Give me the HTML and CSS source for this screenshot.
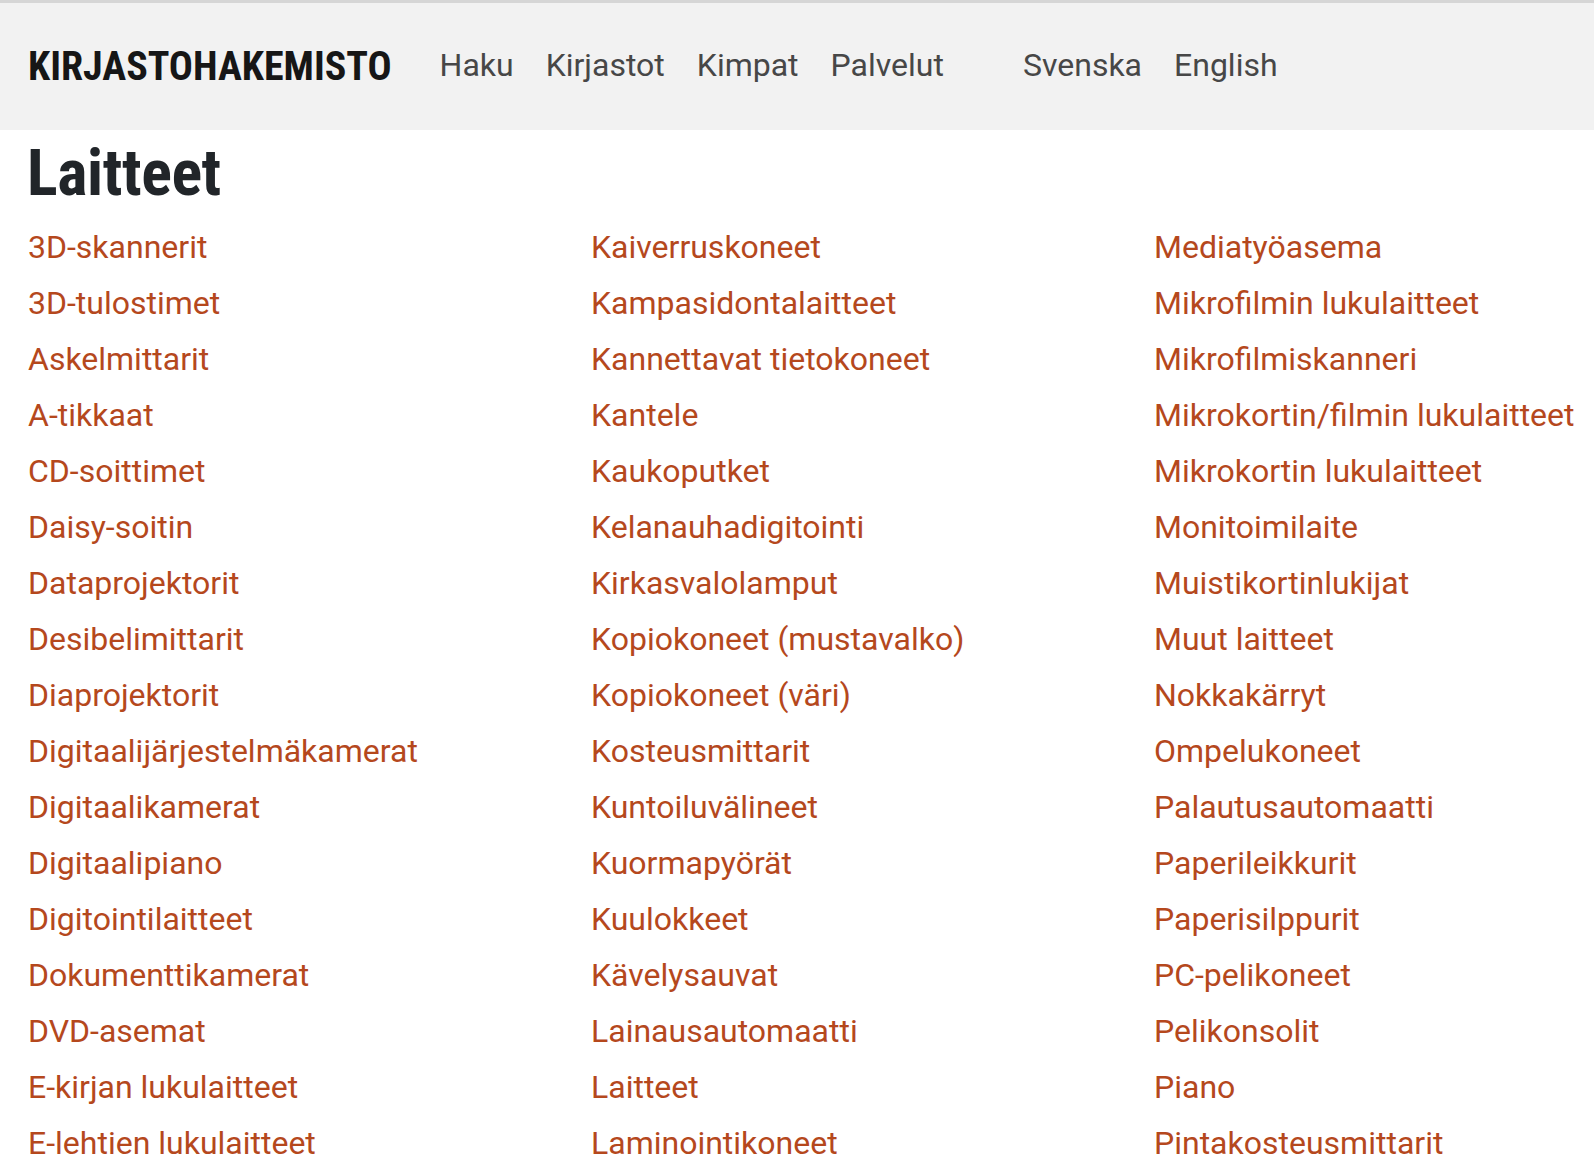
FILE: index.html
```html
<!DOCTYPE html>
<html lang="fi">
<head>
<meta charset="utf-8">
<title>Laitteet – Kirjastohakemisto</title>
<link rel="stylesheet" href="styles.css">
</head>
<body>
<header class="site-header">
  <a class="brand" href="#">KIRJASTOHAKEMISTO</a>
  <nav class="main-nav">
    <a href="#">Haku</a>
    <a href="#">Kirjastot</a>
    <a href="#">Kimpat</a>
    <a href="#">Palvelut</a>
  </nav>
  <nav class="lang-nav">
    <a href="#">Svenska</a>
    <a href="#">English</a>
  </nav>
</header>
<main class="content">
  <h1 class="page-title">Laitteet</h1>
  <div class="term-grid">
    <ul class="term-list">
      <li><a href="#">3D-skannerit</a></li>
      <li><a href="#">3D-tulostimet</a></li>
      <li><a href="#">Askelmittarit</a></li>
      <li><a href="#">A-tikkaat</a></li>
      <li><a href="#">CD-soittimet</a></li>
      <li><a href="#">Daisy-soitin</a></li>
      <li><a href="#">Dataprojektorit</a></li>
      <li><a href="#">Desibelimittarit</a></li>
      <li><a href="#">Diaprojektorit</a></li>
      <li><a href="#">Digitaalijärjestelmäkamerat</a></li>
      <li><a href="#">Digitaalikamerat</a></li>
      <li><a href="#">Digitaalipiano</a></li>
      <li><a href="#">Digitointilaitteet</a></li>
      <li><a href="#">Dokumenttikamerat</a></li>
      <li><a href="#">DVD-asemat</a></li>
      <li><a href="#">E-kirjan lukulaitteet</a></li>
      <li><a href="#">E-lehtien lukulaitteet</a></li>
    </ul>
    <ul class="term-list">
      <li><a href="#">Kaiverruskoneet</a></li>
      <li><a href="#">Kampasidontalaitteet</a></li>
      <li><a href="#">Kannettavat tietokoneet</a></li>
      <li><a href="#">Kantele</a></li>
      <li><a href="#">Kaukoputket</a></li>
      <li><a href="#">Kelanauhadigitointi</a></li>
      <li><a href="#">Kirkasvalolamput</a></li>
      <li><a href="#">Kopiokoneet (mustavalko)</a></li>
      <li><a href="#">Kopiokoneet (väri)</a></li>
      <li><a href="#">Kosteusmittarit</a></li>
      <li><a href="#">Kuntoiluvälineet</a></li>
      <li><a href="#">Kuormapyörät</a></li>
      <li><a href="#">Kuulokkeet</a></li>
      <li><a href="#">Kävelysauvat</a></li>
      <li><a href="#">Lainausautomaatti</a></li>
      <li><a href="#">Laitteet</a></li>
      <li><a href="#">Laminointikoneet</a></li>
    </ul>
    <ul class="term-list">
      <li><a href="#">Mediatyöasema</a></li>
      <li><a href="#">Mikrofilmin lukulaitteet</a></li>
      <li><a href="#">Mikrofilmiskanneri</a></li>
      <li><a href="#">Mikrokortin/filmin lukulaitteet</a></li>
      <li><a href="#">Mikrokortin lukulaitteet</a></li>
      <li><a href="#">Monitoimilaite</a></li>
      <li><a href="#">Muistikortinlukijat</a></li>
      <li><a href="#">Muut laitteet</a></li>
      <li><a href="#">Nokkakärryt</a></li>
      <li><a href="#">Ompelukoneet</a></li>
      <li><a href="#">Palautusautomaatti</a></li>
      <li><a href="#">Paperileikkurit</a></li>
      <li><a href="#">Paperisilppurit</a></li>
      <li><a href="#">PC-pelikoneet</a></li>
      <li><a href="#">Pelikonsolit</a></li>
      <li><a href="#">Piano</a></li>
      <li><a href="#">Pintakosteusmittarit</a></li>
    </ul>
  </div>
</main>
</body>
</html>
```
FILE: styles.css
```css
html, body {
  margin: 0;
  padding: 0;
  overflow: hidden;
}
body {
  font-family: Roboto, "Liberation Sans", sans-serif;
  background: #ffffff;
  color: #212529;
  border-top: 3px solid #d6d6d6;
}
a {
  text-decoration: none;
}
.site-header {
  height: 127px;
  background: #f2f2f2;
  display: flex;
  align-items: center;
  padding-left: 28px;
  box-sizing: border-box;
}
.brand {
  font-family: "Roboto Condensed", Roboto, sans-serif;
  font-stretch: condensed;
  font-weight: 700;
  font-size: 40px;
  line-height: 40px;
  color: #161616;
  margin-right: 32px;
}
.main-nav, .lang-nav {
  display: flex;
}
.lang-nav {
  margin-left: 47px;
}
.main-nav a, .lang-nav a {
  font-size: 32px;
  line-height: 32px;
  color: #474747;
  padding: 0 16px 3px;
}
.content {
  padding-left: 28px;
}
.page-title {
  font-family: "Roboto Condensed", Roboto, sans-serif;
  font-stretch: condensed;
  font-weight: 700;
  font-size: 64px;
  line-height: 1.2;
  letter-spacing: -0.4px;
  margin: 6px 0 6px -1px;
  color: #212529;
}
.term-grid {
  display: grid;
  grid-template-columns: 563px 563px 1fr;
}
.term-list {
  list-style: none;
  margin: 0;
  padding: 0;
}
.term-list li {
  font-size: 32px;
  line-height: 56px;
  white-space: nowrap;
}
.term-list a {
  color: #b5481d;
}
```
